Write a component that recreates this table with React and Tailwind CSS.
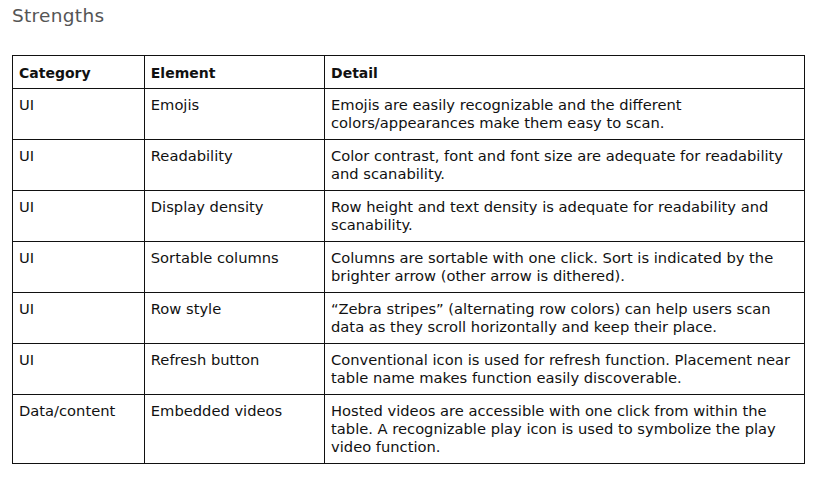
export default function App() {
  const rows = [
    ["UI", "Emojis", ["Emojis are easily recognizable and the different", "colors/appearances make them easy to scan."]],
    ["UI", "Readability", ["Color contrast, font and font size are adequate for readability", "and scanability."]],
    ["UI", "Display density", ["Row height and text density is adequate for readability and", "scanability."]],
    ["UI", "Sortable columns", ["Columns are sortable with one click. Sort is indicated by the", "brighter arrow (other arrow is dithered)."]],
    ["UI", "Row style", ["\u201CZebra stripes\u201D (alternating row colors) can help users scan", "data as they scroll horizontally and keep their place."]],
    ["UI", "Refresh button", ["Conventional icon is used for refresh function. Placement near", "table name makes function easily discoverable."]],
    ["Data/content", "Embedded videos", ["Hosted videos are accessible with one click from within the", "table. A recognizable play icon is used to symbolize the play", "video function."]],
  ];
  return (
    <div className="w-[818px] h-[477px] bg-white pl-[12px] pt-[4px]" style={{ fontFamily: '"DejaVu Sans", "Noto Sans", sans-serif' }}>
      <div className="text-[18.5px] leading-[24px] text-[#555555] tracking-[0.3px]">Strengths</div>
      <table className="mt-[27px] border-collapse w-[793px] text-[14.7px] leading-[18px] text-[#111111]">
        <colgroup>
          <col className="w-[132px]" />
          <col className="w-[181px]" />
          <col className="w-[480px]" />
        </colgroup>
        <thead>
          <tr className="h-[33px]">
            {["Category", "Element", "Detail"].map((h) => (
              <th key={h} className="border border-[#111] text-left text-[14px] font-bold align-middle px-[6px] pt-[1px]">{h}</th>
            ))}
          </tr>
        </thead>
        <tbody>
          {rows.map((r, i) => (
            <tr key={i} className={i === rows.length - 1 ? "h-[69px]" : "h-[51px]"}>
              <td className="border border-[#111] align-top px-[6px] pt-[7px]">{r[0]}</td>
              <td className="border border-[#111] align-top px-[6px] pt-[7px]">{r[1]}</td>
              <td className="border border-[#111] align-top px-[6px] pt-[7px] whitespace-nowrap">
                {r[2].map((l, j) => (
                  <div key={j}>{l}</div>
                ))}
              </td>
            </tr>
          ))}
        </tbody>
      </table>
    </div>
  );
}
